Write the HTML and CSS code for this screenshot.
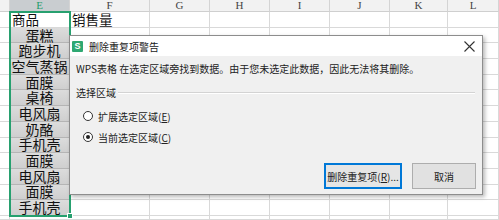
FILE: index.html
```html
<!DOCTYPE html>
<html lang="zh">
<head>
<meta charset="utf-8">
<link rel="stylesheet" href="styles.css">
</head>
<body>
<div class="sheet">
  <div class="h"></div><div class="h he">E</div><div class="h">F</div><div class="h">G</div><div class="h">H</div><div class="h">I</div><div class="h">J</div><div class="h">K</div><div class="h">L</div>
  <div></div><div class="t">商品</div><div class="t">销售量</div><div></div><div></div><div></div><div></div><div></div><div></div>
  <div></div><div class="e">蛋糕</div><div></div><div></div><div></div><div></div><div></div><div></div><div></div>
  <div></div><div class="e">跑步机</div><div></div><div></div><div></div><div></div><div></div><div></div><div></div>
  <div></div><div class="e">空气蒸锅</div><div></div><div></div><div></div><div></div><div></div><div></div><div></div>
  <div></div><div class="e">面膜</div><div></div><div></div><div></div><div></div><div></div><div></div><div></div>
  <div></div><div class="e">桌椅</div><div></div><div></div><div></div><div></div><div></div><div></div><div></div>
  <div></div><div class="e">电风扇</div><div></div><div></div><div></div><div></div><div></div><div></div><div></div>
  <div></div><div class="e">奶酪</div><div></div><div></div><div></div><div></div><div></div><div></div><div></div>
  <div></div><div class="e">手机壳</div><div></div><div></div><div></div><div></div><div></div><div></div><div></div>
  <div></div><div class="e">面膜</div><div></div><div></div><div></div><div></div><div></div><div></div><div></div>
  <div></div><div class="e">电风扇</div><div></div><div></div><div></div><div></div><div></div><div></div><div></div>
  <div></div><div class="e">面膜</div><div></div><div></div><div></div><div></div><div></div><div></div><div></div>
  <div></div><div class="e">手机壳</div><div></div><div></div><div></div><div></div><div></div><div></div><div></div>
  <div></div><div></div><div></div><div></div><div></div><div></div><div></div><div></div><div></div>
</div>
<div class="sel"></div>
<div class="handle"></div>

<div class="dlg">
  <div class="titlebar">
    <span class="logo">S</span>
    <span class="ttl">删除重复项警告</span>
    <svg class="close" width="11" height="11" viewBox="0 0 11 11"><path d="M0.5 0.5 L10.5 10.5 M10.5 0.5 L0.5 10.5" stroke="#333" stroke-width="1.1" fill="none"/></svg>
  </div>
  <div class="body">
    <div class="msg">WPS表格 在选定区域旁找到数据。由于您未选定此数据，因此无法将其删除。</div>
    <div class="group"><span>选择区域</span><span class="gline"></span></div>
    <div class="opt first"><span class="radio"></span><span>扩展选定区域(<u>E</u>)</span></div>
    <div class="opt"><span class="radio on"></span><span>当前选定区域(<u>C</u>)</span></div>
    <div class="btns">
      <div class="btn primary">删除重复项(<u>R</u>)...</div>
      <div class="btn cancel">取消</div>
    </div>
  </div>
</div>
</body>
</html>
```
FILE: styles.css
```css
html, body {
  margin: 0;
  padding: 0;
}
body {
  width: 499px;
  height: 220px;
  overflow: hidden;
  background: #fff;
  position: relative;
  font-family: "Noto Sans CJK SC", "Liberation Sans", sans-serif;
  color: #111;
}
.sheet {
  display: grid;
  grid-template-columns: 10px 60px 80px 60px 60px 60px 60px 58px 51px;
  grid-template-rows: 12px repeat(13, 15.7px) 3.9px;
  overflow: hidden;
}
.sheet > div {
  box-sizing: border-box;
  border-right: 1px solid #d9d9d9;
  border-bottom: 1px solid #d9d9d9;
  font-size: 13.5px;
  line-height: 15px;
  white-space: nowrap;
  display: flex;
  align-items: center;
}
.sheet > .h {
  background: #f2f2f2;
  border-right-color: #d4d4d4;
  border-bottom-color: #cfcfcf;
  font-family: "Liberation Serif", serif;
  font-size: 11px;
  line-height: 11px;
  color: #444;
  justify-content: center;
}
.sheet > .he {
  background: #c9cdd0;
  color: #1f9c6c;
}
.sheet > .t {
  padding-left: 2px;
}
.sheet > .e {
  background: linear-gradient(#dcdcdc, #cfcfcf);
  border-right-color: #b9b9b9;
  border-bottom-color: #b5b5b5;
  justify-content: center;
  font-size: 14px;
}
.sel {
  position: absolute;
  left: 9px;
  top: 11px;
  width: 62px;
  height: 206px;
  box-sizing: border-box;
  border: 2px solid #27a06f;
}
.handle {
  position: absolute;
  left: 67px;
  top: 213px;
  width: 6px;
  height: 6px;
  box-sizing: border-box;
  background: #27a06f;
  border: 1px solid #fff;
}
.dlg {
  position: absolute;
  left: 69px;
  top: 35px;
  width: 414px;
  height: 160px;
  box-sizing: border-box;
  border: 1px solid #8d8d8d;
  background: #f0f0f0;
  box-shadow: 2px 2px 4px rgba(0, 0, 0, 0.28);
  display: flex;
  flex-direction: column;
  font-size: 10px;
  color: #222;
}
.titlebar {
  height: 20px;
  background: #fff;
  display: flex;
  align-items: center;
  padding-left: 2px;
  gap: 6px;
}
.logo {
  width: 11px;
  height: 11px;
  background: #2fa872;
  border-radius: 1px;
  color: #fff;
  font-family: "Liberation Sans", sans-serif;
  font-size: 9px;
  font-weight: bold;
  line-height: 11px;
  text-align: center;
}
.ttl {
  font-size: 10px;
  color: #1a1a1a;
}
.close {
  margin-left: auto;
  margin-right: 7px;
}
.body {
  flex: 1;
  display: flex;
  flex-direction: column;
  padding: 5px 6px 5px 6px;
}
.msg {
  line-height: 16px;
  white-space: nowrap;
}
.group {
  margin-top: 8px;
  display: flex;
  align-items: center;
  line-height: 16px;
}
.gline {
  flex: 1;
  height: 1px;
  background: #d3d3d3;
  border-bottom: 1px solid #fff;
  margin-left: 2px;
  margin-right: 1px;
}
.opt {
  display: flex;
  align-items: center;
  gap: 5px;
  height: 16px;
  margin-top: 5px;
  padding-left: 7px;
}
.opt.first {
  margin-top: 7px;
}
.radio {
  width: 10px;
  height: 10px;
  box-sizing: border-box;
  border: 1px solid #333;
  border-radius: 50%;
  background: #fff;
  display: flex;
  align-items: center;
  justify-content: center;
}
.radio.on::after {
  content: "";
  width: 4px;
  height: 4px;
  border-radius: 50%;
  background: #222;
}
.btns {
  margin-top: auto;
  display: flex;
  justify-content: flex-end;
  gap: 10px;
}
.btn {
  height: 26px;
  box-sizing: border-box;
  display: flex;
  align-items: center;
  justify-content: center;
  background: #e1e1e1;
  white-space: nowrap;
}
.primary {
  width: 78px;
  border: 1px solid #0078d7;
  box-shadow: inset 0 0 0 1px #0078d7;
  background: #e5e5e5;
}
.cancel {
  width: 64px;
  border: 1px solid #adadad;
}
```
